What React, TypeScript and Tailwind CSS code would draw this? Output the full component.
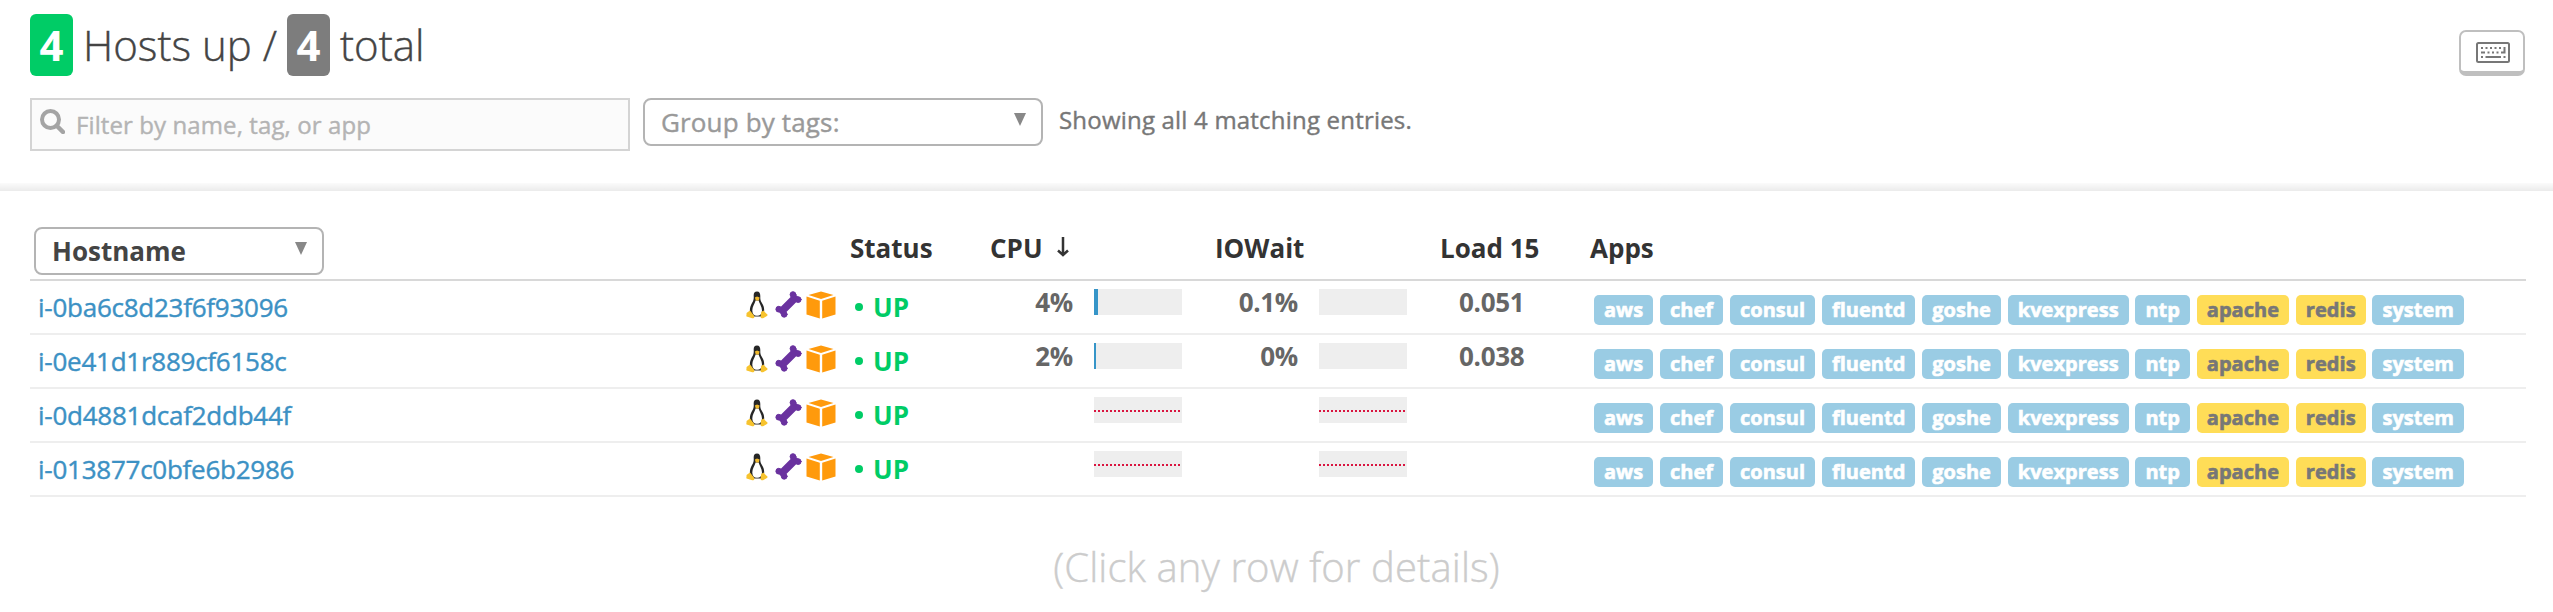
import clsx from 'clsx';

type App = { name: string; custom?: boolean };
type Host = { id: string; cpu?: number; iowait?: number; load?: string };

const hosts: Host[] = [
  { id: 'i-0ba6c8d23f6f93096', cpu: 4, iowait: 0.1, load: '0.051' },
  { id: 'i-0e41d1r889cf6158c', cpu: 2, iowait: 0, load: '0.038' },
  { id: 'i-0d4881dcaf2ddb44f' },
  { id: 'i-013877c0bfe6b2986' },
];

const apps: App[] = [
  { name: 'aws' },
  { name: 'chef' },
  { name: 'consul' },
  { name: 'fluentd' },
  { name: 'goshe' },
  { name: 'kvexpress' },
  { name: 'ntp' },
  { name: 'apache', custom: true },
  { name: 'redis', custom: true },
  { name: 'system' },
];

const columns = 'grid grid-cols-[715px_103px_142px_225px_225px_150px_1fr]';

const Caret = () => (
  <svg className="w-3 h-[13px] shrink-0" viewBox="0 0 12 13" fill="#888">
    <path d="M0 0h12L6 13z" />
  </svg>
);

const KeyboardIcon = () => (
  <svg className="w-[34px] h-[21px]" viewBox="0 0 34 21" fill="#777">
    <rect x="1" y="1" width="32" height="19" rx="1.5" fill="none" stroke="#777" strokeWidth="2" />
    <path d="M5 5h2v2H5zM9.500 5h2v2h-2zM14 5h2v2h-2zM18.500 5h2v2h-2zM23 5h2v2h-2zM27.500 5h2v6.500h-4.500v-2h2.500z" />
    <path d="M5 9.500h4v2H5zM11.500 9.500h2v2h-2zM16 9.500h2v2h-2zM20.500 9.500h2v2h-2zM5 14h2v2H5zM9.500 14h15.500v2H9.500zM27.500 14h2v2h-2z" />
  </svg>
);

const PenguinIcon = () => (
  <svg className="w-[22px] h-7" viewBox="0 0 22 28">
    <path d="M11 .5c-2.600 0-3.500 2-3.300 4.600.2 3-.2 4.400-1.700 7C4.500 15 3.500 17.500 4 21l2.500 4.500h9L18 21c.6-3.500-.4-6.500-2.200-9.300-1.300-2-1.600-3.500-1.500-6.200C14.400 2.500 13.600.5 11 .5z" fill="#262626" />
    <path d="M9.600 9.500h3c.8 3 3.400 6 3.400 10 0 3.500-2 5.300-5 5.300s-4.700-2-4.700-5.300c0-4 2.400-6.500 3.300-10z" fill="#fff" />
    <path d="M8.900 6.600 11 5.400l2.600 1.200-.8 3h-3z" fill="#f0b92d" />
    <path d="M4 19.500 8.300 25c.5 2-1.300 2.600-2.800 2L.5 25.500c-.5-1 .3-1.600 0-3.500zM17.500 19.500l1.500 1.800 2.600 2.400c.4 1-2.500 2.300-4 3.300-1.400.7-3.200.3-3-1.500l.6-4.500z" fill="#f7c32e" />
  </svg>
);

const BoneIcon = () => (
  <svg className="w-[27px] h-[27px]" viewBox="0 0 27 27" fill="#6a329f" stroke="#6a329f" strokeLinecap="round">
    <path d="M7.500 19.500 19.500 7.500" strokeWidth="7.500" />
    <circle cx="18" cy="3.600" r="2.900" />
    <circle cx="23.200" cy="8.600" r="2.900" />
    <circle cx="3.800" cy="18.200" r="2.900" />
    <circle cx="9.200" cy="23.300" r="2.900" />
  </svg>
);

const CubeIcon = () => (
  <svg className="w-[30px] h-7" viewBox="0 0 30 28" fill="#ff9a0c">
    <path d="M15 .5 27.500 4 15 8 2.500 4z" />
    <path d="M.5 5.600 13.800 9.700v17.800L.5 23.600zM29.500 5.600 16.200 9.700v17.800l13.300-3.900z" />
  </svg>
);

const Meter = ({ value }: { value?: number }) => (
  <div className="flex h-[54px] pt-2 pl-px">
    <span className="w-[82px] text-right font-bold text-[#666] leading-[26px] tracking-[-0.3px]">
      {value !== undefined && `${value}%`}
    </span>
    <div className="ml-[21px] w-[88px] h-[26px] bg-[#eee]">
      {value === undefined ? (
        <div className="mt-[13px] h-[2px] bg-[repeating-linear-gradient(90deg,#d9143f_0_2px,transparent_2px_4px)]" />
      ) : (
        <div className="h-full bg-[#3695c8]" style={{ width: Math.floor(value) }} />
      )}
    </div>
  </div>
);

const HostRow = ({ host }: { host: Host }) => (
  <div className={clsx(columns, 'h-[54px] border-b-2 border-[#eee]')}>
    <a href="#" className="pl-2 text-[26px] leading-[52px] tracking-[-0.25px] text-[#3c91c4] [-webkit-text-stroke:0.4px]">
      {host.id}
    </a>
    <div className="flex items-start pt-[10px] pl-px">
      <PenguinIcon />
      <span className="ml-[7px]"><BoneIcon /></span>
      <span className="ml-1"><CubeIcon /></span>
    </div>
    <div className="flex items-center h-[52px] pl-[7px] text-[#0c6] text-[26px] font-bold">
      <span className="mr-[10px] size-2 rounded-full bg-[#0c6]" />
      UP
    </div>
    <Meter value={host.cpu} />
    <Meter value={host.iowait} />
    <span className="pt-2 pl-[19px] font-bold text-[#666] leading-[26px] tracking-[-0.3px]">{host.load}</span>
    <div className="flex items-start gap-[6.800px] pt-[14px] pl-1">
      {apps.map((app) => (
        <span
          key={app.name}
          className={clsx(
            'h-[30px] px-[10px] rounded-[5px] text-[20px] leading-[29px] font-bold tracking-[0.03px] [-webkit-text-stroke:0.6px]',
            app.custom ? 'bg-[#ffdd57] text-[#777]' : 'bg-[#9acce4] text-white',
          )}
        >
          {app.name}
        </span>
      ))}
    </div>
  </div>
);

const App = () => {
  return (
    <div className="h-[612px] overflow-hidden bg-white font-['Open_Sans',sans-serif] text-[26px] text-[#333]">
      {/* Summary and filters */}
      <div className="h-[191px] pt-[14px] pl-[30px] pr-[28px] flex justify-between">
        <div>
          <h1 className="flex text-[42px] leading-[62px] font-light text-[#444] whitespace-pre">
            <span className="w-[43px] rounded-md bg-[#0c6] text-white font-bold text-center">4</span>
            <span className="ml-[10px] w-[204px] [-webkit-text-stroke:0.4px]">Hosts up /</span>
            <span className="w-[43px] rounded-md bg-[#7d7d7d] text-white font-bold text-center">4</span>
            <span className="ml-[10px] [-webkit-text-stroke:0.4px]">total</span>
          </h1>
          <div className="mt-[22px] flex items-start">
            <div className="flex w-[600px] h-[53px] border-2 border-[#d4d4d4] bg-[#fbfbfb] text-[#b4b4b4]">
              <svg className="ml-2 mt-[9px] size-[25px]" viewBox="0 0 25 25" fill="none" stroke="#a4a4a4">
                <circle cx="10.500" cy="10.500" r="8.500" strokeWidth="4" />
                <path d="m17 17 6 6" strokeWidth="4.500" strokeLinecap="round" />
              </svg>
              <span className="ml-[11px] text-[24px] leading-[49px] tracking-[0.1px] [-webkit-text-stroke:0.4px]">
                Filter by name, tag, or app
              </span>
            </div>
            <div className="ml-[13px] flex justify-between w-[400px] h-12 pl-4 pr-[15px] border-2 border-[#b4b4b4] rounded-lg text-[#999]">
              <span className="leading-[44px] tracking-[0.15px] [-webkit-text-stroke:0.4px]">Group by tags:</span>
              <span className="mt-[13px] leading-none"><Caret /></span>
            </div>
            <span className="ml-4 text-[24px] leading-[44px] tracking-[0.2px] text-[#777] [-webkit-text-stroke:0.4px]">
              Showing all 4 matching entries.
            </span>
          </div>
        </div>
        <button className="mt-4 flex justify-center w-[66px] h-[46px] pt-[10px] pl-px border-2 border-b-[5px] border-[#bfbfbf] rounded-[7px]">
          <KeyboardIcon />
        </button>
      </div>
      <div className="-mt-2 h-2 bg-linear-to-b from-[#fbfbfb] to-[#ebebeb]" />

      {/* Host table */}
      <div className="ml-[30px] w-[2496px] pt-9">
        <div className={clsx(columns, 'h-[54px] border-b-2 border-[#d8d8d8] font-bold leading-[42px]')}>
          <div className="ml-[4px] flex justify-between w-[290px] h-12 pl-4 pr-[15px] border-2 border-[#b4b4b4] rounded-lg text-[#444]">
            <span className="leading-[44px]">Hostname</span>
            <span className="mt-[13px] leading-none"><Caret /></span>
          </div>
          <span />
          <span className="pl-[2px]">Status</span>
          <div className="flex">
            <span>CPU</span>
            <svg className="ml-[14px] mt-[10px] w-3 h-5" viewBox="0 0 12 20" fill="none" stroke="#333" strokeWidth="2.500">
              <path d="M6 0v18M1 13.500l5 4.500 5-4.500" />
            </svg>
          </div>
          <span>IOWait</span>
          <span>Load 15</span>
          <span>Apps</span>
        </div>
        {hosts.map((host) => (
          <HostRow key={host.id} host={host} />
        ))}
      </div>

      <p className="pt-[42px] text-center text-[40px] leading-[56px] tracking-[0.1px] font-light text-[#ccc] [-webkit-text-stroke:0.4px]">
        (Click any row for details)
      </p>
    </div>
  );
};

export default App;
